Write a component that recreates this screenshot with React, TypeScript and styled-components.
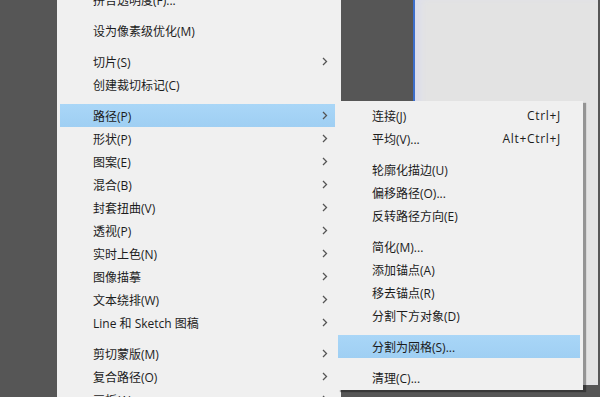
import React from "react";
import styled, { createGlobalStyle } from "styled-components";

const GlobalStyle = createGlobalStyle`
  html, body { margin: 0; padding: 0; background: #565656; overflow: hidden; }
  body { font-family: "Open Sans", "Noto Sans CJK SC", sans-serif; }
`;

const Page = styled.div`
  position: relative;
  display: flex;
  width: 600px;
  height: 397px;
  overflow: hidden;
  background: #565656;
`;

const Gutter = styled.div`
  width: 57px;
  flex: none;
`;

const Menu = styled.div`
  width: 284px;
  flex: none;
  background: #f0f0f0;
  padding: 0 6px 0 3px;
  box-sizing: border-box;
`;

const MenuList = styled.div`
  display: flex;
  flex-direction: column;
  margin-top: -12px;
`;

const Row = styled.div<{ $active?: boolean; $indent: number; $right: number }>`
  height: 23px;
  display: flex;
  align-items: center;
  justify-content: space-between;
  padding: 0 ${(p) => p.$right}px 0 ${(p) => p.$indent}px;
  box-sizing: border-box;
  font-size: 12px;
  color: #1c1c1c;
  white-space: nowrap;
  background: ${(p) => (p.$active ? "linear-gradient(#a9d6f7, #9fcff3)" : "transparent")};
`;

const Separator = styled.div`
  height: 8px;
`;

const Shortcut = styled.span`
  font-size: 12px;
  letter-spacing: 0.7px;
  color: #1c1c1c;
`;

const Right = styled.div`
  flex: 1;
  padding-left: 72px;
`;

const Panel = styled.div`
  width: 183px;
  height: 385px;
  background: #e3e3e3;
  border-left: 2px solid #3d6fcb;
  box-shadow: inset 8px 0 8px -4px #d9dcef;
`;

const SubMenu = styled.div`
  position: absolute;
  left: 337px;
  top: 101px;
  width: 246px;
  padding: 3px 3px 1px 1px;
  box-sizing: border-box;
  background: #f0f0f0;
  display: flex;
  flex-direction: column;
  box-shadow: 3px 2px 1px rgba(0, 0, 0, 0.35);
`;

const Arrow = () => (
  <svg width="6" height="9" viewBox="0 0 6 9">
    <polyline points="1,1 4.5,4.5 1,8" fill="none" stroke="#555" strokeWidth="1.3" />
  </svg>
);

type Item = { label: string; sub?: boolean; active?: boolean; shortcut?: string } | "sep";

const mainItems: Item[] = [
  { label: "拼合透明度(F)..." },
  "sep",
  { label: "设为像素级优化(M)" },
  "sep",
  { label: "切片(S)", sub: true },
  { label: "创建裁切标记(C)" },
  "sep",
  { label: "路径(P)", sub: true, active: true },
  { label: "形状(P)", sub: true },
  { label: "图案(E)", sub: true },
  { label: "混合(B)", sub: true },
  { label: "封套扭曲(V)", sub: true },
  { label: "透视(P)", sub: true },
  { label: "实时上色(N)", sub: true },
  { label: "图像描摹", sub: true },
  { label: "文本绕排(W)", sub: true },
  { label: "Line 和 Sketch 图稿", sub: true },
  "sep",
  { label: "剪切蒙版(M)", sub: true },
  { label: "复合路径(O)", sub: true },
  { label: "画板(A)", sub: true },
];

const subItems: Item[] = [
  { label: "连接(J)", shortcut: "Ctrl+J" },
  { label: "平均(V)...", shortcut: "Alt+Ctrl+J" },
  "sep",
  { label: "轮廓化描边(U)" },
  { label: "偏移路径(O)..." },
  { label: "反转路径方向(E)" },
  "sep",
  { label: "简化(M)..." },
  { label: "添加锚点(A)" },
  { label: "移去锚点(R)" },
  { label: "分割下方对象(D)" },
  "sep",
  { label: "分割为网格(S)...", active: true },
  "sep",
  { label: "清理(C)..." },
];

export default function App() {
  return (
    <>
      <GlobalStyle />
      <Page>
        <Gutter />
        <Menu>
          <MenuList>
            {mainItems.map((it, i) =>
              it === "sep" ? (
                <Separator key={i} />
              ) : (
                <Row key={i} $active={it.active} $indent={33} $right={7}>
                  <span>{it.label}</span>
                  {it.sub && <Arrow />}
                </Row>
              )
            )}
          </MenuList>
        </Menu>
        <Right>
          <Panel />
        </Right>
        <SubMenu>
          {subItems.map((it, i) =>
            it === "sep" ? (
              <Separator key={i} />
            ) : (
              <Row key={i} $active={it.active} $indent={34} $right={19}>
                <span>{it.label}</span>
                {it.shortcut && <Shortcut>{it.shortcut}</Shortcut>}
              </Row>
            )
          )}
        </SubMenu>
      </Page>
    </>
  );
}
